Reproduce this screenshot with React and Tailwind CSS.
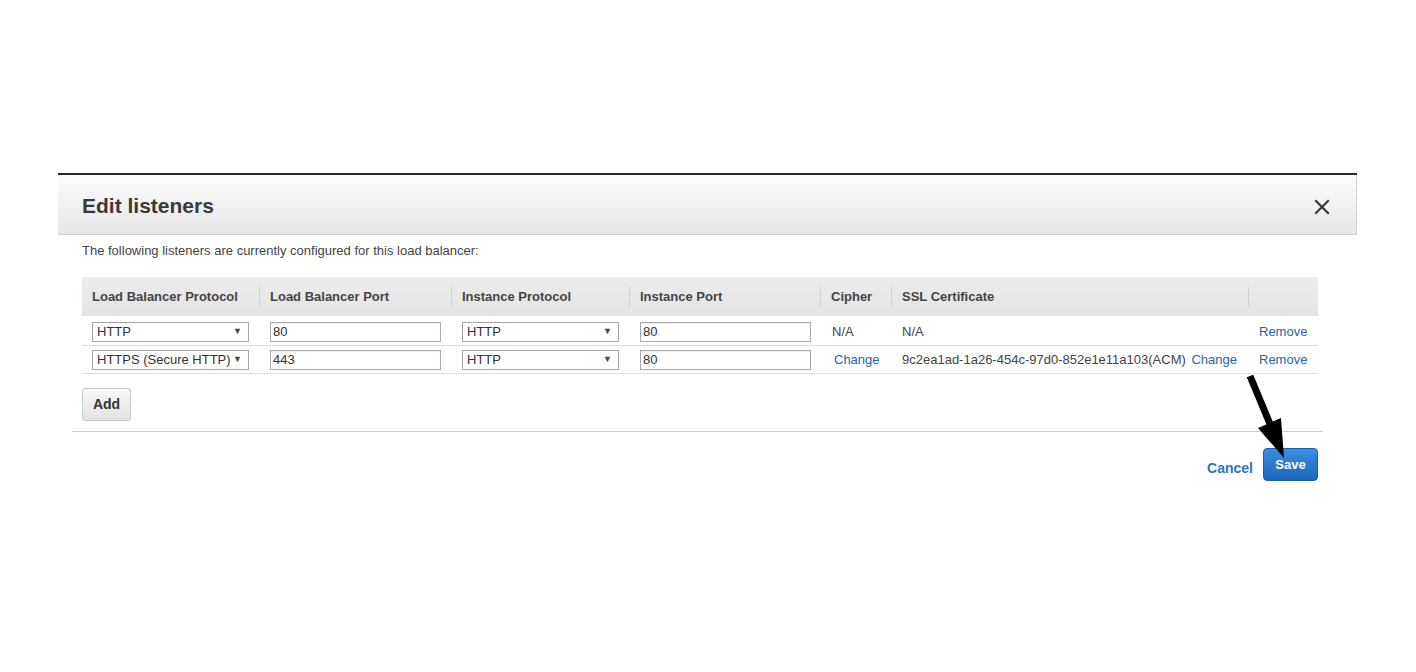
import React from 'react'

const cols = [
  { label: 'Load Balancer Protocol', w: 'w-[177px]' },
  { label: 'Load Balancer Port', w: 'w-[192px]' },
  { label: 'Instance Protocol', w: 'w-[178px]' },
  { label: 'Instance Port', w: 'w-[191px]' },
  { label: 'Cipher', w: 'w-[71px]' },
  { label: 'SSL Certificate', w: 'w-[357px]' },
  { label: '', w: 'w-[70px]' },
]

const rows = [
  { lbProto: 'HTTP', lbPort: '80', inProto: 'HTTP', inPort: '80', cipher: null, cert: null },
  { lbProto: 'HTTPS (Secure HTTP)', lbPort: '443', inProto: 'HTTP', inPort: '80', cipher: 'Change', cert: '9c2ea1ad-1a26-454c-97d0-852e1e11a103(ACM)' },
]

function Select({ value }) {
  return (
    <div className="flex h-[20px] w-[157px] items-center justify-between border border-[#a6a6a6] bg-white pl-[4px] pr-[6px] text-[13px] text-[#333]">
      <span>{value}</span>
      <span className="text-[9px] text-[#444]">▼</span>
    </div>
  )
}

function Input({ value }) {
  return (
    <div className="flex h-[20px] w-[171px] items-center border border-[#a9a9a9] bg-white pl-[2px] text-[13px] text-[#333] shadow-[inset_0_1px_1px_rgba(0,0,0,0.08)]">
      {value}
    </div>
  )
}

export default function App() {
  return (
    <div className="relative min-h-[672px] bg-white pt-[173px] pl-[58px] font-['Liberation_Sans',Arial,sans-serif]">
      <div className="w-[1299px] border-t-2 border-[#2b2b2b]">
        {/* header */}
        <div className="flex h-[60px] items-center justify-between border-b border-r border-[#cfcfcf] bg-gradient-to-b from-[#fdfdfd] to-[#e6e6e6] pl-[24px] pr-[26px]">
          <h2 className="mt-[3px] text-[21px] font-bold text-[#3a3a3a]">Edit listeners</h2>
          <svg width="16" height="16" viewBox="0 0 16 16" className="mt-[4px]">
            <path d="M2 2 L14 14 M14 2 L2 14" stroke="#3a3a3a" strokeWidth="2.2" strokeLinecap="square" />
          </svg>
        </div>

        {/* body */}
        <div className="pl-[24px] pt-[8px]">
          <p className="text-[13px] leading-[16px] text-[#444]">The following listeners are currently configured for this load balancer:</p>

          <div className="mt-[18px] w-[1236px]">
            <div className="flex h-[41px] items-center border-b-2 border-white bg-gradient-to-b from-[#ececec] to-[#e4e4e4]">
              {cols.map((c, i) => (
                <div key={i} className={`flex h-full items-center ${c.w}`}>
                  {i > 0 && <div className="h-[20px] w-px bg-[#d2d2d2]" />}
                  <span className="pl-[10px] text-[13px] font-bold text-[#444]">{c.label}</span>
                </div>
              ))}
            </div>

            {rows.map((r, i) => (
              <div key={i} className="flex h-[28px] items-center border-b border-[#dedede] text-[13px] text-[#444]">
                <div className="w-[177px] pl-[10px]"><Select value={r.lbProto} /></div>
                <div className="w-[192px] pl-[11px]"><Input value={r.lbPort} /></div>
                <div className="w-[178px] pl-[11px]"><Select value={r.inProto} /></div>
                <div className="w-[191px] pl-[11px]"><Input value={r.inPort} /></div>
                <div className="w-[71px] pl-[12px]">
                  {r.cipher ? <a className="pl-[2px] text-[#2a63a8]">{r.cipher}</a> : 'N/A'}
                </div>
                <div className="w-[357px] pl-[11px]">
                  {r.cert ? (
                    <span>{r.cert} <a className="ml-[2px] text-[#2a63a8]">Change</a></span>
                  ) : 'N/A'}
                </div>
                <div className="w-[70px] pl-[11px]"><a className="text-[#2a63a8]">Remove</a></div>
              </div>
            ))}
          </div>

          <button className="mt-[14px] h-[33px] w-[49px] rounded-[3px] border border-[#c8c8c8] bg-gradient-to-b from-[#f8f8f8] to-[#e2e2e2] text-[14px] font-bold text-[#333]">
            Add
          </button>
        </div>

        {/* footer */}
        <div className="ml-[14px] mr-[34px] mt-[10px] border-t border-[#cccccc]" />
        <div className="flex items-center justify-end gap-[10px] pr-[39px] pt-[16px]">
          <a className="mt-[7px] text-[14px] font-bold text-[#2f74c4]">Cancel</a>
          <button className="h-[33px] w-[55px] rounded-[4px] border border-[#1c5fa8] bg-gradient-to-b from-[#3b8ee0] to-[#1b65bd] text-[13px] font-bold text-white">
            Save
          </button>
        </div>
      </div>

      {/* annotation arrow */}
      <svg className="absolute left-[1240px] top-[368px]" width="60" height="95" viewBox="0 0 60 95">
        <line x1="10" y1="8" x2="30" y2="56" stroke="#000" strokeWidth="7" />
        <polygon points="18,60 41,50 44,90" fill="#000" />
      </svg>
    </div>
  )
}
